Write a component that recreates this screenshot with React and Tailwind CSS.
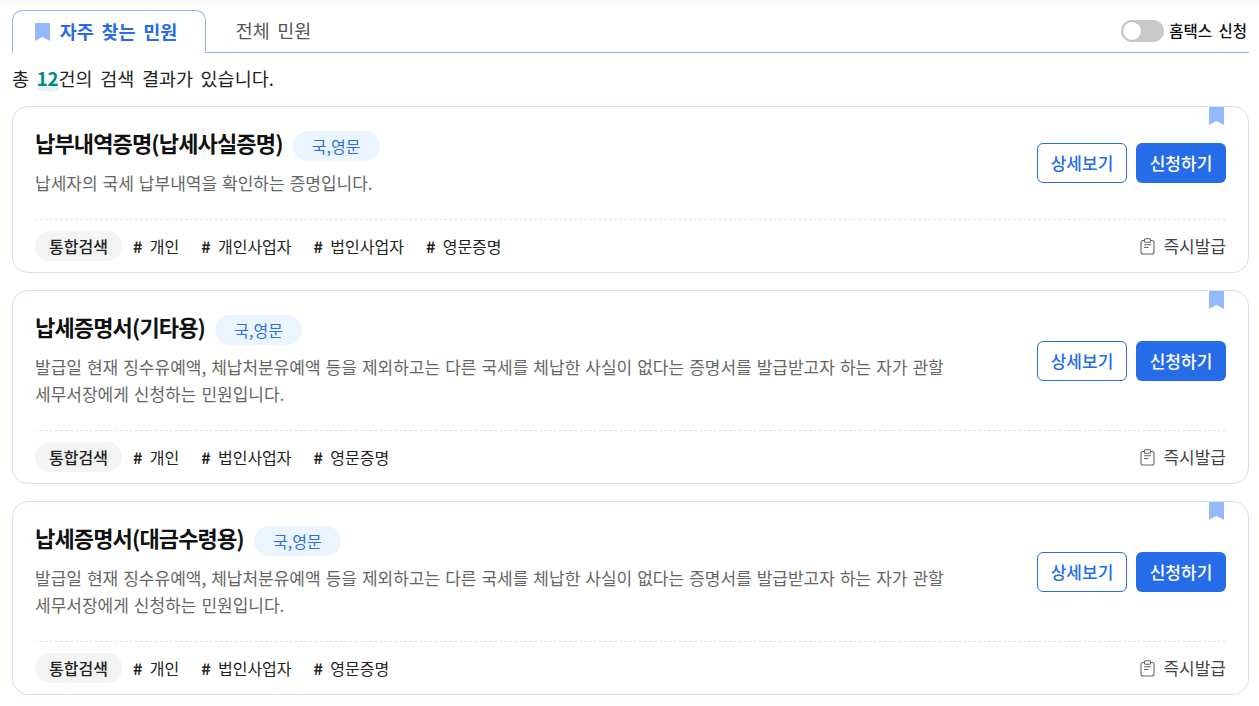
import React from 'react'

const longDesc = (
  <>
    발급일 현재 징수유예액, 체납처분유예액 등을 제외하고는 다른 국세를 체납한 사실이 없다는 증명서를 발급받고자 하는 자가 관할
    <br />
    세무서장에게 신청하는 민원입니다.
  </>
)

const cards = [
  {
    title: '납부내역증명(납세사실증명)',
    desc: '납세자의 국세 납부내역을 확인하는 증명입니다.',
    tags: ['개인', '개인사업자', '법인사업자', '영문증명'],
  },
  {
    title: '납세증명서(기타용)',
    desc: longDesc,
    tags: ['개인', '법인사업자', '영문증명'],
  },
  {
    title: '납세증명서(대금수령용)',
    desc: longDesc,
    tags: ['개인', '법인사업자', '영문증명'],
  },
]

function Bookmark({ className }) {
  return (
    <svg className={className} viewBox="0 0 15 18" fill="#94b8f8">
      <path d="M1 0h13a1 1 0 0 1 1 1v17l-7.5-4L0 18V1a1 1 0 0 1 1-1z" />
    </svg>
  )
}

function Clipboard() {
  return (
    <svg className="w-[15px] h-[17px]" viewBox="0 0 15 17" fill="none" stroke="#666" strokeWidth="1.1">
      <rect x="1" y="2.500" width="13" height="13.500" rx="2" />
      <rect x="4.500" y="0.800" width="6" height="3.400" rx="1" fill="#fff" />
      <path d="M4 6.800h7M4 9.500h4.500" />
    </svg>
  )
}

function Card({ title, desc, tags }) {
  return (
    <div className="relative border border-[#cfe0f8] rounded-2xl px-[22px]">
      <Bookmark className="absolute top-0 right-6 w-[15px] h-[18px]" />
      <div className="flex items-center justify-between pt-6 pb-[23px] border-b border-dashed border-[#d5e3f5]">
        <div>
          <div className="flex items-center gap-[10px]">
            <h3 className="text-[22px] leading-[22px] pb-2 font-bold text-[#111] tracking-[-0.85px]">{title}</h3>
            <span className="w-[87px] h-[30px] rounded-full bg-[#ebf5ff] text-[#2b6de8] text-[16px] flex items-center justify-center">
              국,영문
            </span>
          </div>
          <p className="mt-2 text-[17px] leading-[27px] text-[#666] [word-spacing:1.2px]">{desc}</p>
        </div>
        <div className="flex gap-[9px] mb-[1px] text-[17px] font-medium">
          <button className="w-[90px] h-10 rounded-md border border-[#266ce8] text-[#266ce8] bg-white">상세보기</button>
          <button className="w-[90px] h-10 rounded-md bg-[#266ce8] text-white">신청하기</button>
        </div>
      </div>
      <div className="flex items-center justify-between pt-[11px] pb-[11px]">
        <div className="flex items-center text-[16px] text-[#222]">
          <span className="w-[87px] h-[30px] rounded-full bg-[#f4f4f4] font-medium flex items-center justify-center mr-[11px]">
            통합검색
          </span>
          <div className="flex gap-[22px] [word-spacing:3.7px]">
            {tags.map((t) => (
              <span key={t}>
                <span className="font-semibold">#</span> {t}
              </span>
            ))}
          </div>
        </div>
        <div className="flex items-center gap-[8px] text-[17px] text-[#444]">
          <Clipboard />
          즉시발급
        </div>
      </div>
    </div>
  )
}

export default function App() {
  return (
    <div className="bg-white min-h-[706px] px-3 pr-[10px] pt-[10px] font-['Noto_Sans_CJK_KR',sans-serif] bg-gradient-to-b from-[#f7f7f7] to-white to-[6px]">
      <div className="flex items-center justify-between h-[43px] border-b border-[#8fb4f8]">
        <div className="flex h-[43px]">
          <div className="w-[194px] pr-[6px] border border-b-0 border-[#8fb4f8] rounded-t-[10px] bg-white flex items-center justify-center gap-[10px] text-[18.5px] font-bold text-[#266ce8] [word-spacing:3.5px]">
            <Bookmark className="w-[15px] h-[18px]" />
            자주 찾는 민원
          </div>
          <div className="w-[105px] ml-[15px] flex items-center justify-center text-[18.5px] text-[#555] [word-spacing:3.5px]">전체 민원</div>
        </div>
        <div className="flex items-center gap-[5px] mr-[2px] text-[15.5px] font-medium text-[#111] [word-spacing:3px]">
          <div className="w-[43px] h-[22px] rounded-full bg-[#c9c9c9] flex items-center pl-[1px]">
            <div className="w-5 h-5 rounded-full bg-white border border-[#bbb]" />
          </div>
          홈택스 신청
        </div>
      </div>
      <p className="mt-[11px] mb-[14px] text-[18.5px] leading-[28px] text-[#222] [word-spacing:3.5px]">
        총 <b className="text-[#00878a] bg-[linear-gradient(transparent_60%,#e4f5f3_60%)]">12</b>건의 검색 결과가 있습니다.
      </p>
      <div className="flex flex-col gap-[17px]">
        {cards.map((c) => (
          <Card key={c.title} {...c} />
        ))}
      </div>
    </div>
  )
}
